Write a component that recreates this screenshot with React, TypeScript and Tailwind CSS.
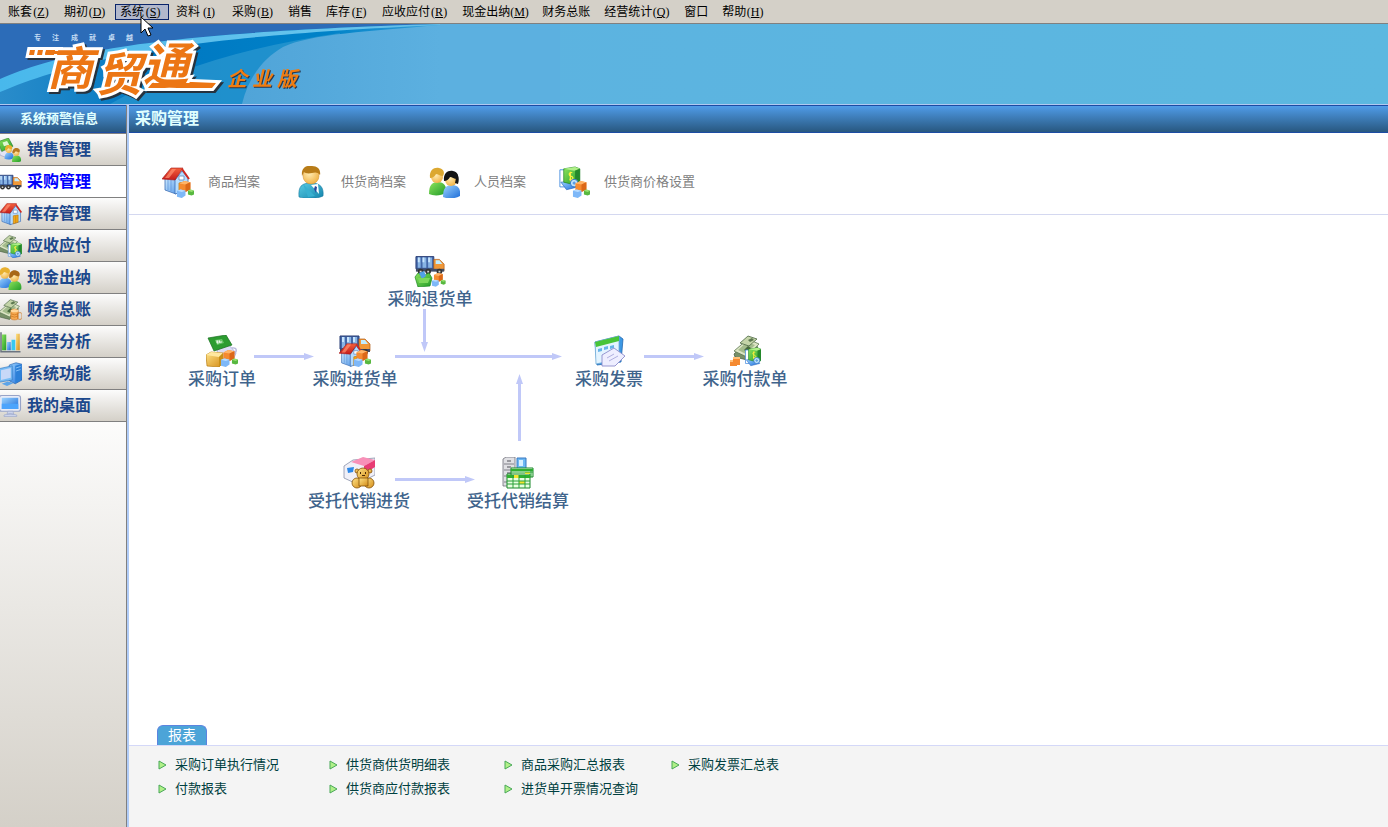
import React, { useState } from 'react';

// shared gradients for all icons
const IconDefs: React.FC = () => (
  <svg width="0" height="0" className="absolute" aria-hidden="true">
    <defs>
      <linearGradient id="wall" x1="0" y1="0" x2="1" y2="1">
        <stop offset="0" stopColor="#d2ecff" />
        <stop offset="1" stopColor="#5a9ce8" />
      </linearGradient>
      <linearGradient id="roof" x1="0" y1="0" x2="0" y2="1">
        <stop offset="0" stopColor="#f4603c" />
        <stop offset="1" stopColor="#c41c1c" />
      </linearGradient>
      <linearGradient id="green" x1="0" y1="0" x2="1" y2="1">
        <stop offset="0" stopColor="#8ee45c" />
        <stop offset="1" stopColor="#1f9a28" />
      </linearGradient>
      <linearGradient id="blue" x1="0" y1="0" x2="1" y2="1">
        <stop offset="0" stopColor="#9cd4ff" />
        <stop offset="1" stopColor="#1c6cd8" />
      </linearGradient>
      <linearGradient id="teal" x1="0" y1="0" x2="1" y2="1">
        <stop offset="0" stopColor="#58cce4" />
        <stop offset="1" stopColor="#1484ac" />
      </linearGradient>
      <radialGradient id="skin" cx="0.4" cy="0.35" r="0.7">
        <stop offset="0" stopColor="#ffecb4" />
        <stop offset="1" stopColor="#f0b040" />
      </radialGradient>
      <linearGradient id="gold" x1="0" y1="0" x2="1" y2="1">
        <stop offset="0" stopColor="#ffe488" />
        <stop offset="1" stopColor="#d48c18" />
      </linearGradient>
    </defs>
  </svg>
);

const Cubes = () => (
  <g transform="translate(-7 -7) scale(1.22)">
    <path d="M20 20l4-2 5 1v6l-4 2-5-1z" fill="#f58a30" />
    <path d="M20 20l4-2 5 1-4 2z" fill="#ffb468" />
    <path d="M25 21l4-2v6l-4 2z" fill="#dc6818" />
    <path d="M18 26l3-1 4 1v4l-3 2-4-1z" fill="#7eb8f8" />
    <path d="M18 26l3-1 4 1-3 1z" fill="#b8dcff" />
    <path d="M27 26l2-1 3 1v3l-2 1-3-1z" fill="#58b840" />
    <path d="M27 26l2-1 3 1-2 1z" fill="#98e070" />
  </g>
);

const House = () => (
  <g>
    <path d="M3 12h11v16L3 24z" fill="url(#wall)" stroke="#3a6cb4" strokeWidth=".8" />
    <path d="M6 13v11M9 13v12" stroke="#5890d8" strokeWidth=".7" />
    <path d="M13 14l7-9 6 7v12l-13 4z" fill="#b4dcff" stroke="#3a6cb4" strokeWidth=".8" />
    <path d="M0 13L9 2h12l-8 12z" fill="url(#roof)" stroke="#a41818" strokeWidth=".6" />
    <path d="M3 12l7-9h4l-7 9z" fill="#ff9070" opacity=".7" />
    <path d="M20 3l7 10" stroke="#d02820" strokeWidth="2" />
    <path d="M17 10h5v4h-5z" fill="#fff" stroke="#6488b8" strokeWidth=".8" />
    <path d="M17 17l6-1v9l-6 2z" fill="#f0a818" stroke="#b87008" strokeWidth=".7" />
    <path d="M20 17v9" stroke="#b87008" strokeWidth=".6" />
  </g>
);

const Truck = () => (
  <g>
    <path d="M1 7h19v13H1z" fill="#4468a8" stroke="#283c74" />
    <path d="M3 8h3v11H3zM8 8h4v11H8zM14 8h4v11h-4z" fill="#88b4e4" />
    <path d="M3 8h2v5H3zM8 8h2v5H8zM14 8h2v5h-2z" fill="#c8e4fc" />
    <path d="M20 10h6l5 5v7H20z" fill="#f09838" stroke="#b05c18" strokeWidth=".7" />
    <path d="M22 11h4l3 4h-7z" fill="#c0ecff" />
    <path d="M1 20h30v3H1z" fill="#404c68" />
    <circle cx="6" cy="23" r="3" fill="#333" />
    <circle cx="14" cy="23" r="3" fill="#333" />
    <circle cx="26" cy="23" r="3" fill="#333" />
    <path d="M5 22h2v2H5zM13 22h2v2h-2zM25 22h2v2h-2z" fill="#d4d4d4" />
  </g>
);

const Safe = () => (
  <g>
    <path d="M2 4h5v18H2z" fill="#fff" stroke="#4c90e0" />
    <path d="M3 17l6 8 12-3-4-6z" fill="url(#blue)" stroke="#1c5cb8" strokeWidth=".6" />
    <path d="M6 3l12-2 5 2v15l-5 2-12-3z" fill="url(#green)" stroke="#1c8024" strokeWidth=".7" />
    <path d="M6 3l12-2 5 2-6 2z" fill="#b0f088" />
    <path d="M18 5l5-2v15l-5 2z" fill="#24882c" />
    <path d="M15 7c-4-1-4 3-1 4s2 4-2 3M13 6v10" stroke="#fff040" strokeWidth="1.3" fill="none" />
    <circle cx="17" cy="18" r="4" fill="#c0e4fc" stroke="#3478c8" />
    <path d="M15 18l2-2 2 2-2 2" fill="#5c9ce0" />
  </g>
);

const Cash = () => (
  <g>
    <path d="M1 20L14 8l11 5-11 13-12-3z" fill="#789068" stroke="#40583c" strokeWidth=".7" />
    <path d="M1 17L15 5l11 5-12 13z" fill="#dce4c4" stroke="#5c7850" strokeWidth=".8" />
    <path d="M5 16L14 8l8 3-9 9z" fill="#a4bc8c" />
    <path d="M7 9l8-7 9 3-8 7z" fill="#c4d4a8" stroke="#4c6844" strokeWidth=".8" />
    <path d="M11 16l4-4 3 2-4 4z" fill="#47683c" />
    <path d="M15 6l4-2 2 2-4 2z" fill="#5c7850" />
  </g>
);

const Note = () => (
  <g>
    <path d="M11 15l12-5 7 8-2 5-9 3-7-5z" fill="#dcdcf4" stroke="#a8a8d0" strokeWidth=".8" />
    <path d="M26 13c6-1 5 5 1 6" fill="none" stroke="#b8b8dc" strokeWidth="1.4" />
    <path d="M2 3l18-3 6 10-18 6z" fill="#2c9c30" stroke="#187020" strokeWidth=".7" />
    <path d="M9 5l7-1 2 4-7 2z" fill="#68c468" />
    <path d="M11 5l1 4M13 5l1 3M10 7h6" stroke="#fff" strokeWidth=".8" />
  </g>
);

const Coins = () => (
  <g>
    <path d="M17 17c0-3 10-3 10 0v10c0 3-10 3-10 0z" fill="#f4a850" stroke="#c06818" strokeWidth=".6" />
    <ellipse cx="22" cy="17" rx="5" ry="2" fill="#ffd89c" />
    <path d="M26 21c0-2 6-2 6 0v6c0 2-6 2-6 0zM17 21q5 3 10 0M17 24q5 3 10 0" fill="none" stroke="#d07820" />
  </g>
);

const Guy: React.FC<{ body: string; hair: string }> = ({ body, hair }) => (
  <g>
    <path d="M1 28c0-9 3-12 9-12s9 4 8 11c-5 3-13 3-17 1z" fill={body} />
    <circle cx="9" cy="11" r="6" fill="url(#skin)" />
    <path d="M2 12C1 3 7 1 11 2c5 1 6 5 4 8-3 0-5-2-7-2-1 2-3 4-6 4z" fill={hair} />
  </g>
);

const icons: { [key: string]: React.ReactNode } = {
  goods: (
    <>
      <House />
      <Cubes />
    </>
  ),
  house: <g transform="translate(2 0) scale(1.08)"><House /></g>,
  truck: <Truck />,
  supplier: (
    <>
      <path d="M4 31c-1-11 3-14 12-14s13 4 12 13c-6 3-18 3-24 1z" fill="url(#teal)" stroke="#1878a0" strokeWidth=".6" />
      <path d="M16 19l7-1 1 10z" fill="#fff" />
      <path d="M20 20l2 1-1 6-2-4z" fill="#28489c" />
      <path d="M8 18l12 12-7 1z" fill="#38b0d0" />
      <circle cx="16" cy="10" r="8" fill="url(#skin)" stroke="#d09030" strokeWidth=".5" />
      <path d="M7 10C6 2 11-1 17 0c6 0 9 4 8 9-2-3-5-3-8-2-4 1-7 0-8-1z" fill="#b87c18" />
    </>
  ),
  staff: (
    <>
      <Guy body="url(#green)" hair="#dca830" />
      <g transform="translate(14 3)">
        <Guy body="url(#blue)" hair="#141414" />
        <path d="M10 3c6 0 8 5 6 12l-3-1 1-5-4-2z" fill="#141414" />
      </g>
    </>
  ),
  price: (
    <>
      <g transform="scale(.95)"><Safe /></g>
      <Cubes />
    </>
  ),
  sales: (
    <>
      <path d="M1 17l12-5 7 7-9 7-8-3z" fill="#e4e4f4" stroke="#a8a8c8" />
      <path d="M0 5L14 0l6 11-15 7z" fill="url(#green)" stroke="#187020" strokeWidth=".7" />
      <path d="M6 6l6-2 3 5-7 2z" fill="#e0f8d0" />
      <g transform="translate(8 8) scale(.7)"><Guy body="url(#blue)" hair="#e8b030" /></g>
      <g transform="translate(18 12) scale(.7)"><Guy body="url(#green)" hair="#b87820" /></g>
    </>
  ),
  payable: (
    <>
      <Cash />
      <g transform="translate(12 11) scale(.85 .85)"><Safe /></g>
    </>
  ),
  cashier: (
    <>
      <Guy body="url(#blue)" hair="#e8b030" />
      <g transform="translate(13 4)"><Guy body="url(#green)" hair="#a86818" /></g>
    </>
  ),
  ledger: (
    <>
      <g transform="scale(1.1)"><Cash /></g>
      <Coins />
    </>
  ),
  chart: (
    <>
      <path d="M5 6h6v21H5z" fill="url(#green)" />
      <path d="M12 16h5v11h-5z" fill="url(#blue)" />
      <path d="M18 13h5v14h-5z" fill="#38c8f0" />
      <path d="M24 5h5v22h-5z" fill="url(#gold)" />
      <path d="M4 3v26h26" fill="none" stroke="#6c7480" strokeWidth="2" />
    </>
  ),
  system: (
    <>
      <path d="M15 4l9-3 8 2v21l-9 5-8-4z" fill="url(#blue)" stroke="#1858a8" strokeWidth=".8" />
      <path d="M23 5l8-2v21l-8 4z" fill="#2c80d8" />
      <path d="M24 8l6-2M24 12l6-2" stroke="#a0d4ff" />
      <path d="M1 9l18-4v19L1 27z" fill="#78bcf4" stroke="#2870c0" strokeWidth=".8" />
      <path d="M4 11l13-3v13L4 24z" fill="#c8d8f8" />
      <path d="M5 29l8-3 8 2-9 4z" fill="#5ca4e8" />
    </>
  ),
  desktop: (
    <>
      <rect x="2" y="2" width="28" height="21" rx="3" fill="#e8ecf8" stroke="#98a4c8" strokeWidth="1.5" />
      <rect x="5" y="5" width="22" height="15" fill="url(#blue)" />
      <path d="M5 13h22v7H5z" fill="#4ca4fc" />
      <path d="M13 23h7l1 4H12zM8 28q8-4 17 0v2H8z" fill="#ccd4ec" stroke="#98a4c8" strokeWidth=".8" />
    </>
  ),
  order: (
    <>
      <Note />
      <path d="M0 20l5-3 12 1v10l-4 4-12-1z" fill="url(#gold)" stroke="#b87c10" strokeWidth=".7" />
      <path d="M0 20l5-3 12 1-4 4z" fill="#ffe8a0" />
      <path d="M13 22l4-4v10l-4 4z" fill="#c89018" />
      <Cubes />
    </>
  ),
  returns: (
    <>
      <g transform="translate(1 -5) scale(.94)"><Truck /></g>
      <path d="M1 22l3-4 5 3 6-3 3 5-2 8-12 1z" fill="url(#green)" stroke="#1c8824" strokeWidth=".7" />
      <path d="M5 18l5-2 2 5-4 3z" fill="#50a0e8" />
      <path d="M4 23h12l-2 5H5z" fill="#7cd85c" />
      <g transform="translate(6 6) scale(.8)"><Cubes /></g>
    </>
  ),
  incoming: (
    <>
      <g transform="translate(0 -6)"><Truck /></g>
      <g transform="translate(0 7) scale(.87)"><House /></g>
      <Cubes />
    </>
  ),
  invoice: (
    <>
      <path d="M2 7l24-6 4 3-2 23-24 3z" fill="#3c98e4" stroke="#2468b0" strokeWidth=".8" />
      <path d="M2 7l24-6v23L3 29z" fill="#e4f4ff" stroke="#70acd8" strokeWidth=".8" />
      <path d="M2 7l24-6v5L3 12z" fill="#48c438" />
      <path d="M5 14l4-1v3l-4 1zM11 12l4-1v3l-4 1zM17 11l4-1v3l-4 1z" fill="#68b4e8" />
      <path d="M9 20l12-7 11 8-10 10H9z" fill="#eeeeff" stroke="#8c8ccc" strokeWidth=".9" />
      <path d="M14 23l7-4M16 26l9-5" stroke="#b0b0e0" />
    </>
  ),
  payment: (
    <>
      <g transform="translate(4 -1)"><Cash /></g>
      <g transform="translate(15 12) scale(.75)"><Safe /></g>
      <path d="M1 25h7v6H1zM4 22h7v8H4z" fill="#f58a30" />
      <path d="M4 22h7v2H4zM1 25h3v2H1z" fill="#ffc078" />
    </>
  ),
  consign: (
    <>
      <path d="M1 9l9-6 22-2v17l-18 9L1 21z" fill="#f0f0f8" stroke="#8890a8" strokeWidth=".8" />
      <path d="M8 5l12-5 12 3-11 6z" fill="#f890b8" />
      <path d="M21 9l11-6v7l-11 7z" fill="#e83c74" />
      <path d="M4 11l7-1-1 5-5 1z" fill="#2c88e8" />
      <g fill="url(#gold)" stroke="#845008" strokeWidth=".8">
        <circle cx="14" cy="14" r="2" />
        <circle cx="27" cy="14" r="2" />
        <circle cx="20" cy="17" r="6" />
        <circle cx="14" cy="26" r="5" />
        <circle cx="26" cy="26" r="5" />
        <path d="M16 21h9v8h-9z" />
      </g>
      <path d="M17 15h1v2h-1zM22 15h1v2h-1zM19 18h3v1h-3z" fill="#4c2c08" />
    </>
  ),
  settle: (
    <>
      <path d="M1 2l3-2h9v29H1z" fill="#e0e0e4" stroke="#707078" strokeWidth=".8" />
      <path d="M2 7h10M2 13h10M2 19h10M2 25h10" stroke="#808088" />
      <path d="M5 4h4M5 10h4M5 16h4" stroke="#505058" />
      <path d="M15 1h9v13h-9z" fill="#6cb8f4" stroke="#3878c0" />
      <path d="M17 3h4v6h-4z" fill="#d8f0ff" />
      <path d="M9 11h22v9H9zM5 17h23v14H5z" fill="#e8ffe0" stroke="#188828" />
      <path d="M9 12h22v2H9zM5 18h23v3H5z" fill="#30b030" />
      <path d="M12 18h5v3h-5zM17 24h6v3h-6zM23 15h5v2h-5z" fill="#f4e430" />
      <path d="M5 24h23M5 27h23M9 15h22M11 18v13M17 18v13M23 18v13M29 12v8" stroke="#28a038" fill="none" />
    </>
  ),
};

const Icon: React.FC<{ name: string; size?: number }> = ({ name, size = 32 }) => (
  <svg width={size} height={size} viewBox="0 0 32 32" className="shrink-0" aria-hidden="true">
    {icons[name]}
  </svg>
);

const menus = [
  { label: '账套', hotkey: 'Z' },
  { label: '期初', hotkey: 'D' },
  { label: '系统', hotkey: 'S' },
  { label: '资料', hotkey: 'I' },
  { label: '采购', hotkey: 'B' },
  { label: '销售' },
  { label: '库存', hotkey: 'F' },
  { label: '应收应付', hotkey: 'R' },
  { label: '现金出纳', hotkey: 'M' },
  { label: '财务总账' },
  { label: '经营统计', hotkey: 'Q' },
  { label: '窗口' },
  { label: '帮助', hotkey: 'H' },
];

const modules = [
  { label: '销售管理', icon: 'sales' },
  { label: '采购管理', icon: 'truck' },
  { label: '库存管理', icon: 'house' },
  { label: '应收应付', icon: 'payable' },
  { label: '现金出纳', icon: 'cashier' },
  { label: '财务总账', icon: 'ledger' },
  { label: '经营分析', icon: 'chart' },
  { label: '系统功能', icon: 'system' },
  { label: '我的桌面', icon: 'desktop' },
];

const archives = [
  { label: '商品档案', icon: 'goods' },
  { label: '供货商档案', icon: 'supplier' },
  { label: '人员档案', icon: 'staff' },
  { label: '供货商价格设置', icon: 'price' },
];

const nodes = [
  { label: '采购退货单', icon: 'returns', pos: 'left-[250px] top-[40px]' },
  { label: '采购订单', icon: 'order', pos: 'left-[42px] top-[120px]' },
  { label: '采购进货单', icon: 'incoming', pos: 'left-[175px] top-[120px]' },
  { label: '采购发票', icon: 'invoice', pos: 'left-[429px] top-[120px]' },
  { label: '采购付款单', icon: 'payment', pos: 'left-[565px] top-[120px]' },
  { label: '受托代销进货', icon: 'consign', pos: 'left-[179px] top-[242px]' },
  { label: '受托代销结算', icon: 'settle', pos: 'left-[338px] top-[242px]' },
];

const reports = [
  '采购订单执行情况',
  '供货商供货明细表',
  '商品采购汇总报表',
  '采购发票汇总表',
  '付款报表',
  '供货商应付款报表',
  '进货单开票情况查询',
];

const Banner: React.FC = () => (
  <header className="h-[80px] overflow-hidden bg-gradient-to-r from-[#5cb0e0] to-[#5cb8e0]">
    <svg width="560" height="80" viewBox="0 0 560 80" role="img" aria-label="商贸通 企业版">
      <defs>
        <linearGradient id="sky" gradientUnits="userSpaceOnUse" x1="0" y1="0" x2="440" y2="0">
          <stop offset="0" stopColor="#2a8cca" />
          <stop offset="0.35" stopColor="#0078c2" />
          <stop offset="0.75" stopColor="#0082c8" />
          <stop offset="1" stopColor="#38a0d8" />
        </linearGradient>
        <linearGradient id="swoosh" x1="0" y1="0" x2="1" y2="0">
          <stop offset="0" stopColor="#48b8ec" />
          <stop offset="0.6" stopColor="#68c4ec" />
          <stop offset="1" stopColor="#5cb0e0" />
        </linearGradient>
        <linearGradient id="arc" gradientUnits="userSpaceOnUse" x1="240" y1="0" x2="440" y2="0">
          <stop offset="0" stopColor="#50a4d8" />
          <stop offset="1" stopColor="#5cb0e0" />
        </linearGradient>
      </defs>
      <path d="M0 0H560V80H0z" fill="url(#sky)" />
      <path d="M110 80C170 46 250 22 340 9L330 80z" fill="#2c98d0" opacity=".7" />
      <path d="M242 80C248 55 262 35 283 23C310 10 370 7 440 1H560V80z" fill="url(#arc)" />
      <path d="M0 0H440C180 8 70 24 0 57z" fill="#2c6cb8" />
      <path d="M0 55C70 24 180 8 440 0H560V1H440C200 12 90 30 0 68z" fill="url(#swoosh)" />
      <path d="M440 0H560V6L440 2z" fill="#5cb0e0" />
      <text
        x="34 52 71 89 108 126"
        y="16"
        fontFamily="Noto Sans CJK SC, sans-serif"
        fontSize="7"
        fontWeight="700"
        fill="#c4dcf4"
      >
        专注成就卓越
      </text>
      <g fontFamily="Noto Sans CJK SC, sans-serif" fontWeight="700" fontStyle="italic">
        <g
          className="drop-shadow-[2px_2px_0_#26323e] [paint-order:stroke]"
          fill="#ec7614"
          stroke="#fff"
          strokeWidth="6"
          fontSize="46"
        >
          <path d="M30 26h5l-1 5h-5zM38 26h5l-1 5h-5zM46 26h14v5H45zM134 35h20v5h-21zM150 57l42 1 24 1-4 5h-64z" />
          <text x="47" y="61">商</text>
          <text x="96" y="67">贸</text>
          <text x="143" y="57">通</text>
          <path d="M46 27h14v3H45zM152 59h40l23 1-3 3h-62z" stroke="none" />
        </g>
        <text
          x="227 252 277"
          y="62"
          fontSize="20"
          fill="#f07c10"
          className="drop-shadow-[1px_1px_0_#263850]"
        >
          企业版
        </text>
      </g>
    </svg>
  </header>
);

const Arrows: React.FC = () => (
  <svg width="700" height="300" className="absolute left-0 top-0" aria-hidden="true">
    <g fill="#c0c8f8">
      <path d="M125 140h50v-2l10 3.500-10 3.500v-2h-50z" />
      <path d="M266 140h157v-2l10 3.500-10 3.500v-2H266z" />
      <path d="M515 140h50v-2l10 3.500-10 3.500v-2h-50z" />
      <path d="M266 263h70v-2l10 3.500-10 3.500v-2h-70z" />
      <path d="M294 94h3v33h2l-3.500 10-3.500-10h2z" />
      <path d="M389 226v-57h-2l3.500-10 3.500 10h-2v57z" />
    </g>
  </svg>
);

const App: React.FC = () => {
  const [activeMenu, setActiveMenu] = useState('系统');
  const [activeModule, setActiveModule] = useState('采购管理');

  return (
    <div className="flex min-h-screen flex-col bg-white font-['Liberation_Sans','Noto_Sans_CJK_SC',sans-serif]">
      <IconDefs />

      <nav className="flex h-6 items-center border-b border-[#808080] bg-[#d4d0c8] pl-px pt-px text-xs text-black">
        {menus.map((menu) => (
          <div key={menu.label} className="relative pl-0.5">
            <button
              type="button"
              onClick={() => setActiveMenu(menu.label)}
              className={`flex h-4 items-center whitespace-nowrap border pl-1 pr-[6px] ${
                activeMenu === menu.label ? 'border-[#0a246a] bg-[#b2b8cc]' : 'border-transparent'
              }`}
            >
              {menu.label}
              {menu.hotkey && (
                <span className="w-[18px] text-center font-['Liberation_Serif',serif]">
                  (<span className="underline">{menu.hotkey}</span>)
                </span>
              )}
            </button>
            {menu.label === '系统' && (
              <svg width="13" height="21" viewBox="0 0 13 21" className="absolute left-[27px] top-3 z-10" aria-hidden="true">
                <path d="M1 1v16l4-4 3 7 3-1-3-7h5z" fill="#fff" stroke="#000" />
              </svg>
            )}
          </div>
        ))}
      </nav>

      <Banner />

      <div className="flex flex-1 border-t border-[#b0c8f0]">
        <aside className="flex w-[127px] shrink-0 flex-col border-r border-[#808080] bg-gradient-to-b from-white from-40% to-[#d4d0c8]">
          <h2 className="flex h-7 items-center border-y border-[#1c4ca4] bg-gradient-to-b from-[#509ce8] to-[#285880] pl-5 text-[13px] font-bold text-[#e0ffff]">
            系统预警信息
          </h2>
          <ul className="border-t border-[#808080]">
            {modules.map((item) => (
              <li key={item.label}>
                <button
                  type="button"
                  onClick={() => setActiveModule(item.label)}
                  className={`flex h-8 w-full items-center gap-[5px] overflow-hidden whitespace-nowrap border-b border-[#808080] text-base font-bold ${
                    activeModule === item.label
                      ? 'bg-white text-[#0000ff]'
                      : 'bg-gradient-to-b from-[#fcfcfc] to-[#d4d0c8] text-[#1c488c]'
                  }`}
                >
                  <span className="-ml-0.5 shrink-0">
                    <Icon name={item.icon} size={24} />
                  </span>
                  {item.label}
                </button>
              </li>
            ))}
          </ul>
        </aside>

        <main className="flex flex-1 flex-col border-l-2 border-[#b0ccf8]">
          <h1 className="flex h-7 items-center border-y border-[#1c4ca4] bg-gradient-to-b from-[#509ce8] to-[#285880] pl-1.5 text-base font-bold text-[#e0ffff]">
            采购管理
          </h1>

          <div className="grid h-[82px] grid-cols-[133px_133px_130px_auto] items-center border-b border-[#d4d8f0] pl-[33px] pt-4">
            {archives.map((item) => (
              <a key={item.label} href="#" className="flex items-center gap-[14px] whitespace-nowrap text-[13px] text-[#808080]">
                <Icon name={item.icon} />
                {item.label}
              </a>
            ))}
          </div>

          {/* purchase flow chart */}
          <div className="relative min-h-[300px] flex-1">
            <Arrows />
            {nodes.map((node) => (
              <a
                key={node.label}
                href="#"
                className={`absolute flex w-[102px] flex-col items-center gap-px whitespace-nowrap text-[17px] font-medium leading-6 text-[#40648c] ${node.pos}`}
              >
                <Icon name={node.icon} />
                {node.label}
              </a>
            ))}
          </div>

          <div className="pl-7">
            <button type="button" className="flex h-5 items-center rounded-t-md border border-b-0 border-[#5c84e0] bg-[#4ca4d8] px-[10px] pb-0.5 text-sm text-white">
              报表
            </button>
          </div>
          <div className="grid h-[82px] grid-cols-[171px_175px_167px_auto] content-start border-t border-[#d4d8f8] bg-[#f4f4f4] pl-7 pt-[7px]">
            {reports.map((report) => (
              <a key={report} href="#" className="flex h-6 items-center gap-2 whitespace-nowrap text-[13px] text-[#004040]">
                <svg width="10" height="10" viewBox="0 0 10 10" aria-hidden="true">
                  <path d="M2 1l7 4-7 4z" fill="#b0f088" stroke="#48a858" />
                </svg>
                {report}
              </a>
            ))}
          </div>
        </main>
      </div>
    </div>
  );
};

export default App;
